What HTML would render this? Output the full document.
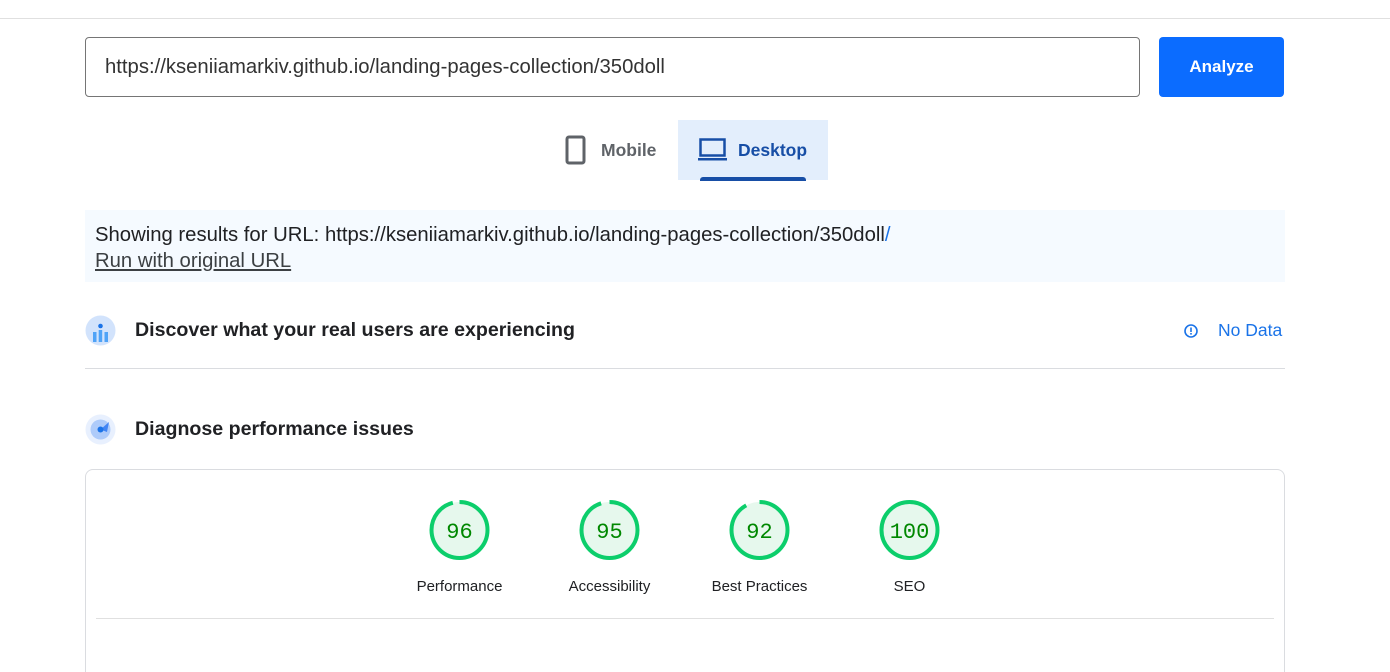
<!DOCTYPE html>
<html style="overflow:hidden;height:672px"><head><style>
body{margin:0;width:1390px;height:672px;background:#fff;font-family:"Liberation Sans",sans-serif;position:relative;overflow:hidden}
.a{position:absolute}
</style></head><body>
<div class="a" style="left:0;top:18px;width:1390px;height:1px;background:#e0e0e0"></div>
<div class="a" style="left:85px;top:37px;width:1053px;height:58px;border:1px solid #757575;border-radius:4px"></div>
<div class="a" style="left:105px;top:56px;font-size:20.3px;color:#333">https://kseniiamarkiv.github.io/landing-pages-collection/350doll</div>
<div class="a" style="left:1159px;top:37px;width:125px;height:60px;background:#0b6cff;border-radius:4px;color:#fff;font-size:17px;font-weight:bold;text-align:center;line-height:60px">Analyze</div>
<svg class="a" style="left:564px;top:135px" width="24" height="30" viewBox="0 0 24 30"><rect x="3" y="2" width="17" height="26" rx="2" fill="none" stroke="#5f6368" stroke-width="3"/></svg>
<div class="a" style="left:601px;top:140px;font-size:17.5px;font-weight:bold;color:#5f6368">Mobile</div>
<div class="a" style="left:678px;top:120px;width:150px;height:60px;background:#e3eefc"></div>
<svg class="a" style="left:698px;top:137px" width="30" height="26"><rect x="2.5" y="2.5" width="24" height="16" fill="none" stroke="#174ea6" stroke-width="2.5"/><rect x="0" y="21" width="29" height="2.5" fill="#174ea6"/></svg>
<div class="a" style="left:738px;top:140px;font-size:17.5px;font-weight:bold;color:#174ea6">Desktop</div>
<div class="a" style="left:700px;top:177px;width:106px;height:4px;background:#174ea6;border-radius:3px 3px 0 0"></div>
<div class="a" style="left:85px;top:210px;width:1200px;height:72px;background:#f5faff"></div>
<div class="a" style="left:95px;top:224px;font-size:20.3px;color:#202124">Showing results for URL: https://kseniiamarkiv.github.io/landing-pages-collection/350doll<span style="color:#1a73e8">/</span></div>
<div class="a" style="left:95px;top:250px;font-size:20.3px;color:#3c4043;text-decoration:underline">Run with original URL</div>
<svg class="a" style="left:85px;top:315px" width="31" height="31"><circle cx="15.5" cy="15.5" r="15" fill="#d2e3fc"/><circle cx="15.5" cy="11" r="2.3" fill="#1a73e8"/><rect x="8" y="17" width="3.5" height="10" fill="#4fa3f7"/><rect x="13.7" y="15" width="3.5" height="12" fill="#4fa3f7"/><rect x="19.5" y="17" width="3.5" height="10" fill="#4fa3f7"/></svg>
<div class="a" style="left:135px;top:319px;font-size:19.6px;font-weight:bold;color:#202124">Discover what your real users are experiencing</div>
<svg class="a" style="left:1183px;top:323px" width="16" height="16"><circle cx="8" cy="8" r="6" fill="none" stroke="#1a73e8" stroke-width="1.6"/><rect x="7.2" y="4.5" width="1.6" height="4.5" fill="#1a73e8"/><rect x="7.2" y="10" width="1.6" height="1.6" fill="#1a73e8"/></svg>
<div class="a" style="left:1218px;top:320px;font-size:17.5px;color:#1a73e8">No Data</div>
<div class="a" style="left:85px;top:368px;width:1200px;height:1px;background:#dadce0"></div>
<svg class="a" style="left:85px;top:414px" width="31" height="31"><circle cx="15.5" cy="15.5" r="15" fill="#e8f0fe"/><circle cx="15.5" cy="15.5" r="10" fill="#aecbfa"/><path d="M15.5 15.5 L24 8 L22 18 Z" fill="#4285f4"/><circle cx="15.5" cy="15.5" r="3" fill="#1a73e8"/></svg>
<div class="a" style="left:135px;top:418px;font-size:19.6px;font-weight:bold;color:#202124">Diagnose performance issues</div>
<div class="a" style="left:85px;top:469px;width:1198px;height:210px;border:1px solid #dadce0;border-radius:8px"></div>
<div class="a" style="left:96px;top:618px;width:1178px;height:1px;background:#e0e0e0"></div>
<svg class="a" style="left:0;top:0" width="1390" height="672">
<g font-family="Liberation Mono,monospace" font-size="22" fill="#008800" text-anchor="middle">
<g transform="translate(459.5,530)"><circle r="28" fill="#e6f8ed"/><circle r="28" fill="none" stroke="#0cce6b" stroke-width="4" stroke-dasharray="168.9 175.9" transform="rotate(-90)"/><text y="8">96</text></g>
<g transform="translate(609.5,530)"><circle r="28" fill="#e6f8ed"/><circle r="28" fill="none" stroke="#0cce6b" stroke-width="4" stroke-dasharray="167.1 175.9" transform="rotate(-90)"/><text y="8">95</text></g>
<g transform="translate(759.5,530)"><circle r="28" fill="#e6f8ed"/><circle r="28" fill="none" stroke="#0cce6b" stroke-width="4" stroke-dasharray="161.8 175.9" transform="rotate(-90)"/><text y="8">92</text></g>
<g transform="translate(909.5,530)"><circle r="28" fill="#e6f8ed"/><circle r="28" fill="none" stroke="#0cce6b" stroke-width="4"/><text y="8">100</text></g>
</g>
<g font-family="Liberation Sans,sans-serif" font-size="15" fill="#202124" text-anchor="middle">
<text x="459.5" y="591">Performance</text><text x="609.5" y="591">Accessibility</text><text x="759.5" y="591">Best Practices</text><text x="909.5" y="591">SEO</text>
</g>
</svg>
</body></html>
